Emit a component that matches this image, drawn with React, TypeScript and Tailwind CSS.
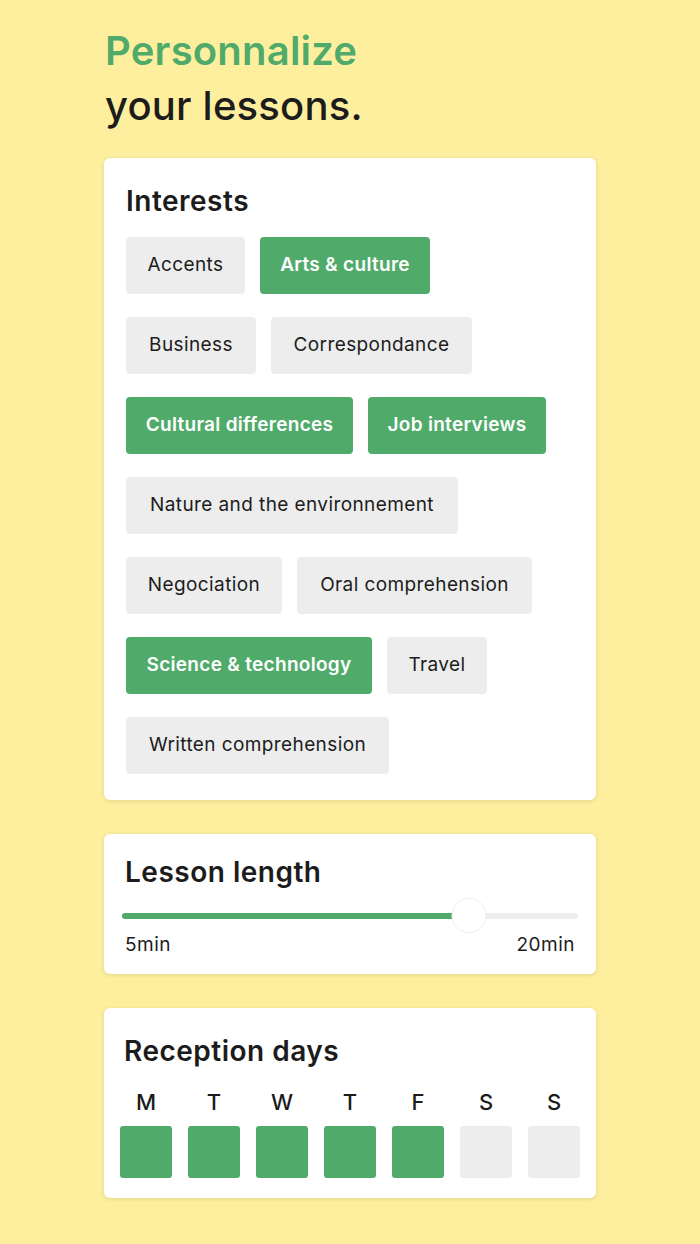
import { useState } from "react";

// widths taken from the design so the chips wrap the same way
const interests = [
  { name: "Accents", w: "w-[119px]" },
  { name: "Arts & culture", w: "w-[170px]" },
  { name: "Business", w: "w-[130px]" },
  { name: "Correspondance", w: "w-[201px]" },
  { name: "Cultural differences", w: "w-[227px]" },
  { name: "Job interviews", w: "w-[178px]" },
  { name: "Nature and the environnement", w: "w-[332px]" },
  { name: "Negociation", w: "w-[156px]" },
  { name: "Oral comprehension", w: "w-[235px]" },
  { name: "Science & technology", w: "w-[246px]" },
  { name: "Travel", w: "w-[100px]" },
  { name: "Written comprehension", w: "w-[263px]" },
];

const days = ["M", "T", "W", "T", "F", "S", "S"];

export default function App() {
  const [selected, setSelected] = useState<string[]>([
    "Arts & culture",
    "Cultural differences",
    "Job interviews",
    "Science & technology",
  ]);
  const [activeDays, setActiveDays] = useState([true, true, true, true, true, false, false]);
  const [length] = useState(76);

  const toggle = (name: string) =>
    setSelected((prev) =>
      prev.includes(name) ? prev.filter((n) => n !== name) : [...prev, name],
    );

  return (
    <div
      className="min-h-[1244px] w-full bg-[#feef9e] px-[104px] pt-[23px] pb-10 text-[#1c1c1c]"
      style={{ fontFamily: "Inter, 'Noto Sans', sans-serif" }}
    >
      <h1 className="pl-[1px] text-[40px] leading-[55px] tracking-[0.2px]">
        <span className="block font-semibold text-[#50ab6b]">Personnalize</span>
        <span className="block font-medium">your lessons.</span>
      </h1>

      <section className="mt-[25px] rounded-md bg-white px-[22px] pt-[26px] pb-[26px] shadow-[0_1px_4px_rgba(0,0,0,0.12)]">
        <h2 className="text-[28px] leading-[34px] font-semibold tracking-[0.5px]">Interests</h2>
        <div className="mt-[19px] flex flex-wrap gap-x-[15px] gap-y-[23px]">
          {interests.map(({ name, w }) => {
            const on = selected.includes(name);
            return (
              <button
                key={name}
                type="button"
                onClick={() => toggle(name)}
                className={
                  on
                    ? `${w} flex h-[57px] items-center justify-center rounded-[4px] bg-[#50ab6b] text-[19px] font-semibold tracking-[0.3px] text-white`
                    : `${w} flex h-[57px] items-center justify-center rounded-[4px] bg-[#ededed] text-[19px] font-normal tracking-[0.4px] text-[#1c1c1c]`
                }
              >
                {name}
              </button>
            );
          })}
        </div>
      </section>

      <section className="mt-[34px] rounded-md bg-white px-[18px] pt-[21px] pb-[17px] shadow-[0_1px_4px_rgba(0,0,0,0.12)]">
        <h2 className="pl-[3px] text-[28px] leading-[34px] font-semibold tracking-[0.5px]">Lesson length</h2>
        <div className="relative mt-[9px] h-[35px]">
          <div className="absolute top-[15px] right-0 left-0 h-[6px] rounded-full bg-[#ededed]" />
          <div
            className="absolute top-[15px] left-0 h-[6px] rounded-full bg-[#50ab6b]"
            style={{ width: `${length}%` }}
          />
          <div
            className="absolute top-0 h-[35px] w-[35px] -translate-x-1/2 rounded-full border border-[#eeeeee] bg-white"
            style={{ left: `${length}%` }}
          />
        </div>
        <div className="flex justify-between px-[3px] text-[19px] leading-[24px] tracking-[0.5px]">
          <span>5min</span>
          <span>20min</span>
        </div>
      </section>

      <section className="mt-[34px] rounded-md bg-white px-[16px] pt-[26px] pb-[20px] shadow-[0_1px_4px_rgba(0,0,0,0.12)]">
        <h2 className="pl-[4px] text-[28px] leading-[34px] font-semibold tracking-[0.5px]">Reception days</h2>
        <div className="mt-[21px] grid grid-cols-7 gap-x-[16px]">
          {days.map((d, i) => (
            <div key={i} className="flex flex-col items-center gap-[11px]">
              <span className="text-[22px] leading-[26px] font-medium">{d}</span>
              <button
                type="button"
                onClick={() =>
                  setActiveDays((prev) => prev.map((v, j) => (j === i ? !v : v)))
                }
                className={
                  activeDays[i]
                    ? "h-[52px] w-[52px] rounded-[3px] bg-[#50ab6b]"
                    : "h-[52px] w-[52px] rounded-[3px] bg-[#ededed]"
                }
              />
            </div>
          ))}
        </div>
      </section>
    </div>
  );
}
